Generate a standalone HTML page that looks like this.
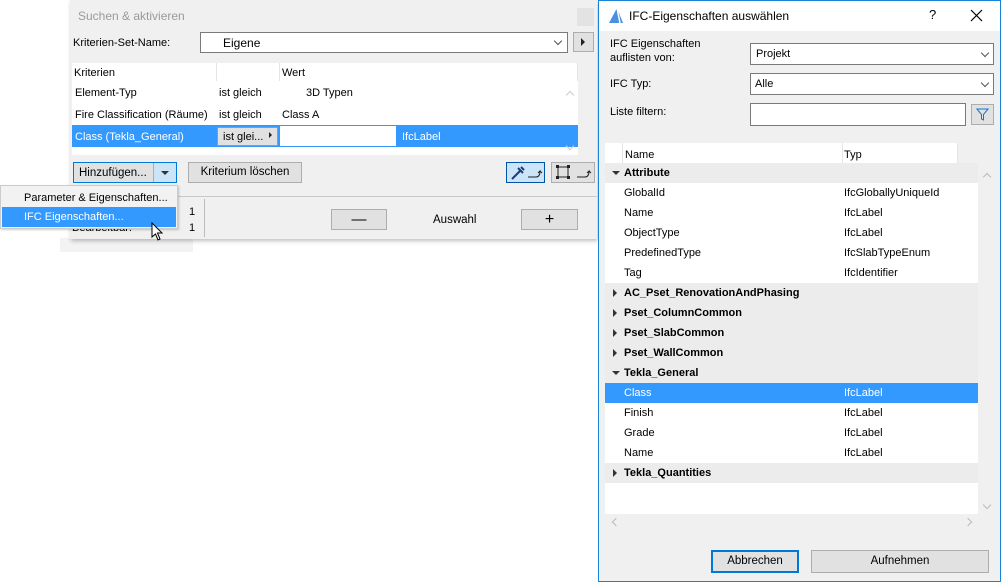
<!DOCTYPE html>
<html><head><meta charset="utf-8"><style>
*{box-sizing:border-box;margin:0;padding:0}
body{width:1001px;height:582px;background:#fff;position:relative;overflow:hidden;font-family:"Liberation Sans",sans-serif;font-size:11px;color:#000}
.a{position:absolute}
.t{position:absolute;white-space:nowrap;line-height:14px}
.btn{position:absolute;background:#e1e1e1;border:1px solid #adadad;text-align:center;line-height:19px}
.grp{background:#ececec;font-weight:bold}
.row{position:absolute;left:0;width:373px;height:20px;line-height:21px}
.row .n{position:absolute;left:19px}
.row .y{position:absolute;left:239px}
.tri-d{position:absolute;left:7px;top:8px;width:0;height:0;border-left:4px solid transparent;border-right:4px solid transparent;border-top:4px solid #333}
.tri-r{position:absolute;left:8px;top:6px;width:0;height:0;border-top:4px solid transparent;border-bottom:4px solid transparent;border-left:4px solid #333}
.chev{position:absolute;width:6px;height:6px;border-right:1px solid #555;border-bottom:1px solid #555;transform:rotate(45deg)}
</style></head><body>
<div class="a" style="left:60px;top:238px;width:133px;height:14px;background:#f3f3f3"></div>
<div class="a" style="left:70px;top:0;width:527px;height:239px;background:#f0f0f0;box-shadow:1px 2px 4px rgba(0,0,0,.25)"></div>
<div class="t" style="left:78px;top:9px;font-size:12px;color:#9a9a9a">Suchen &amp; aktivieren</div>
<div class="a" style="left:577px;top:8px;width:17px;height:18px;background:#e3e3e3"></div>
<div class="t" style="left:73px;top:36px">Kriterien-Set-Name:</div>
<div class="a" style="left:200px;top:32px;width:368px;height:21px;background:#fff;border:1px solid #7a7a7a"></div>
<div class="t" style="left:223px;top:36px;font-size:12px">Eigene</div>
<div class="chev" style="left:555px;top:38px"></div>
<div class="a" style="left:573px;top:32px;width:21px;height:20px;background:#e1e1e1;border:1px solid #adadad"></div>
<div class="a" style="left:581px;top:38px;border-top:4px solid transparent;border-bottom:4px solid transparent;border-left:4px solid #222"></div>
<div class="a" style="left:72px;top:63px;width:506px;height:92px;background:#fff"></div>
<div class="a" style="left:216px;top:63px;width:1px;height:18px;background:#e5e5e5"></div>
<div class="a" style="left:279px;top:63px;width:1px;height:18px;background:#e5e5e5"></div>
<div class="a" style="left:577px;top:63px;width:1px;height:18px;background:#e5e5e5"></div>
<div class="t" style="left:74px;top:66px">Kriterien</div>
<div class="t" style="left:282px;top:66px">Wert</div>
<div class="t" style="left:75px;top:86px">Element-Typ</div>
<div class="t" style="left:219px;top:86px">ist gleich</div>
<div class="t" style="left:306px;top:86px">3D Typen</div>
<div class="t" style="left:75px;top:108px">Fire Classification (Räume)</div>
<div class="t" style="left:219px;top:108px">ist gleich</div>
<div class="t" style="left:282px;top:108px">Class A</div>
<div class="a" style="left:72px;top:125px;width:506px;height:22px;background:#3399ff"></div>
<div class="t" style="left:75px;top:130px;color:#fff">Class (Tekla_General)</div>
<div class="a" style="left:217px;top:127px;width:61px;height:19px;background:#e1e1e1;border:1px solid #999"></div>
<div class="t" style="left:223px;top:130px">ist glei...</div>
<div class="a" style="left:269px;top:132px;border-top:3px solid transparent;border-bottom:3px solid transparent;border-left:3px solid #222"></div>
<div class="a" style="left:280px;top:126px;width:116px;height:20px;background:#fff"></div>
<div class="t" style="left:402px;top:130px;color:#fff">IfcLabel</div>
<div class="chev" style="left:567px;top:92px;transform:rotate(225deg);border-color:#ccc"></div>
<div class="chev" style="left:567px;top:143px;border-color:#ccc"></div>
<div class="a" style="left:73px;top:162px;width:104px;height:21px;border:1px solid #0078d7;background:#e1e1e1"></div>
<div class="a" style="left:153px;top:163px;width:23px;height:19px;background:#cce4f7;border-left:1px solid #adadad"></div>
<div class="t" style="left:79px;top:166px;font-size:11.5px">Hinzufügen...</div>
<div class="a" style="left:161px;top:171px;border-left:4px solid transparent;border-right:4px solid transparent;border-top:4px solid #333"></div>
<div class="btn" style="left:188px;top:162px;width:114px;height:21px;font-size:11.5px">Kriterium löschen</div>
<div class="a" style="left:506px;top:162px;width:39px;height:21px;background:#cce4f7;border:1px solid #0054a6"></div>
<svg class="a" style="left:506px;top:162px" width="39" height="21"><path d="M6 17 L14 9 M12 6 L17 11 M15 5 l3 3" stroke="#1a3c80" stroke-width="2"/><path d="M22 15 h8 q4 0 4-6 l-2 2 M34 9 l2 2" stroke="#222" fill="none"/></svg>
<div class="a" style="left:551px;top:162px;width:44px;height:21px;background:#e1e1e1;border:1px solid #adadad"></div>
<svg class="a" style="left:551px;top:162px" width="44" height="21"><rect x="7" y="5" width="10" height="10" fill="none" stroke="#222"/><rect x="5" y="3" width="3" height="3" fill="#222"/><rect x="16" y="3" width="3" height="3" fill="#222"/><rect x="5" y="14" width="3" height="3" fill="#222"/><rect x="16" y="14" width="3" height="3" fill="#222"/><path d="M26 15 h8 q4 0 4-6 l-2 2 M38 9 l2 2" stroke="#222" fill="none"/></svg>
<div class="a" style="left:70px;top:196px;width:527px;height:1px;background:#c8c8c8"></div>
<div class="a" style="left:204px;top:199px;width:1px;height:38px;background:#bbb"></div>
<div class="t" style="left:72px;top:221px">Bearbeitbar:</div>
<div class="t" style="left:189px;top:205px">1</div>
<div class="t" style="left:189px;top:221px">1</div>
<div class="btn" style="left:331px;top:209px;width:56px;height:21px;font-size:15px">—</div>
<div class="t" style="left:433px;top:213px;font-size:11.5px">Auswahl</div>
<div class="btn" style="left:521px;top:209px;width:57px;height:21px;font-size:16px">+</div>
<div class="a" style="left:0;top:185px;width:178px;height:44px;background:#f2f2f2;border:1px solid #ccc;box-shadow:1px 1px 2px rgba(0,0,0,.2)"></div>
<div class="t" style="left:24px;top:191px;font-size:11px">Parameter &amp; Eigenschaften...</div>
<div class="a" style="left:2px;top:207px;width:174px;height:20px;background:#3399ff"></div>
<div class="t" style="left:24px;top:210px;font-size:11px;color:#fff">IFC Eigenschaften...</div>
<svg class="a" style="left:151px;top:222px" width="14" height="20"><path d="M1 1 L1 15 L4.5 12 L7 18 L9 17 L6.5 11 L11 11 Z" fill="#fff" stroke="#000"/></svg>
<div class="a" style="left:598px;top:0;width:403px;height:582px;background:#f0f0f0;border:1px solid #1883d7"></div>
<div class="a" style="left:599px;top:1px;width:401px;height:30px;background:#fff"></div>
<svg class="a" style="left:608px;top:7px" width="16" height="17"><path d="M1 16 L9 1 L15 16 Z" fill="#4a90e2"/><path d="M9 1 L12 16" stroke="#fff" stroke-width="1.5"/></svg>
<div class="t" style="left:629px;top:9px;font-size:12px">IFC-Eigenschaften auswählen</div>
<div class="t" style="left:929px;top:8px;font-size:13px">?</div>
<svg class="a" style="left:970px;top:9px" width="13" height="13"><path d="M1 1 L12 12 M12 1 L1 12" stroke="#000" stroke-width="1.2"/></svg>
<div class="t" style="left:610px;top:37px">IFC Eigenschaften<br>auflisten von:</div>
<div class="a" style="left:750px;top:43px;width:244px;height:22px;background:#fff;border:1px solid #7a7a7a"></div>
<div class="t" style="left:756px;top:47px">Projekt</div>
<div class="chev" style="left:982px;top:50px"></div>
<div class="t" style="left:610px;top:77px">IFC Typ:</div>
<div class="a" style="left:750px;top:73px;width:244px;height:22px;background:#fff;border:1px solid #7a7a7a"></div>
<div class="t" style="left:755px;top:77px">Alle</div>
<div class="chev" style="left:982px;top:80px"></div>
<div class="t" style="left:610px;top:105px">Liste filtern:</div>
<div class="a" style="left:750px;top:103px;width:216px;height:23px;background:#fff;border:1px solid #7a7a7a"></div>
<div class="a" style="left:971px;top:104px;width:23px;height:21px;background:#e1e1e1;border:1px solid #adadad"></div>
<svg class="a" style="left:976px;top:108px" width="13" height="13"><path d="M1 1 H12 L7.5 6.5 V12 L5.5 11 V6.5 Z" fill="none" stroke="#1a73c8"/></svg>
<div class="a" style="left:605px;top:143px;width:373px;height:371px;background:#fff">
 <div class="a" style="left:17px;top:0;width:1px;height:20px;background:#e5e5e5"></div>
 <div class="a" style="left:237px;top:0;width:1px;height:20px;background:#e5e5e5"></div>
 <div class="a" style="left:352px;top:0;width:1px;height:20px;background:#e5e5e5"></div>
 <div class="a" style="left:353px;top:0;width:20px;height:20px;background:#f0f0f0"></div>
 <div class="t" style="left:20px;top:5px">Name</div>
 <div class="t" style="left:239px;top:5px">Typ</div>
 <div class="row grp" style="top:20px"><div class="tri-d"></div><span class="n">Attribute</span></div>
 <div class="row" style="top:40px"><span class="n">GlobalId</span><span class="y">IfcGloballyUniqueId</span></div>
 <div class="row" style="top:60px"><span class="n">Name</span><span class="y">IfcLabel</span></div>
 <div class="row" style="top:80px"><span class="n">ObjectType</span><span class="y">IfcLabel</span></div>
 <div class="row" style="top:100px"><span class="n">PredefinedType</span><span class="y">IfcSlabTypeEnum</span></div>
 <div class="row" style="top:120px"><span class="n">Tag</span><span class="y">IfcIdentifier</span></div>
 <div class="row grp" style="top:140px"><div class="tri-r"></div><span class="n">AC_Pset_RenovationAndPhasing</span></div>
 <div class="row grp" style="top:160px"><div class="tri-r"></div><span class="n">Pset_ColumnCommon</span></div>
 <div class="row grp" style="top:180px"><div class="tri-r"></div><span class="n">Pset_SlabCommon</span></div>
 <div class="row grp" style="top:200px"><div class="tri-r"></div><span class="n">Pset_WallCommon</span></div>
 <div class="row grp" style="top:220px"><div class="tri-d"></div><span class="n">Tekla_General</span></div>
 <div class="row" style="top:240px;background:#3399ff;color:#fff"><span class="n">Class</span><span class="y">IfcLabel</span></div>
 <div class="row" style="top:260px"><span class="n">Finish</span><span class="y">IfcLabel</span></div>
 <div class="row" style="top:280px"><span class="n">Grade</span><span class="y">IfcLabel</span></div>
 <div class="row" style="top:300px"><span class="n">Name</span><span class="y">IfcLabel</span></div>
 <div class="row grp" style="top:320px"><div class="tri-r"></div><span class="n">Tekla_Quantities</span></div>
</div>
<div class="a" style="left:978px;top:163px;width:17px;height:351px;background:#f0f0f0"></div>
<div class="chev" style="left:984px;top:174px;transform:rotate(225deg);border-color:#bbb"></div>
<div class="chev" style="left:984px;top:502px;border-color:#bbb"></div>
<div class="chev" style="left:613px;top:519px;transform:rotate(135deg);border-color:#bbb"></div>
<div class="chev" style="left:965px;top:519px;transform:rotate(-45deg);border-color:#bbb"></div>
<div class="a" style="left:711px;top:550px;width:88px;height:23px;background:#e1e1e1;border:2px solid #0078d7;text-align:center;line-height:19px;font-size:11.5px">Abbrechen</div>
<div class="btn" style="left:811px;top:550px;width:178px;height:23px;font-size:11.5px;line-height:21px">Aufnehmen</div>
</body></html>
